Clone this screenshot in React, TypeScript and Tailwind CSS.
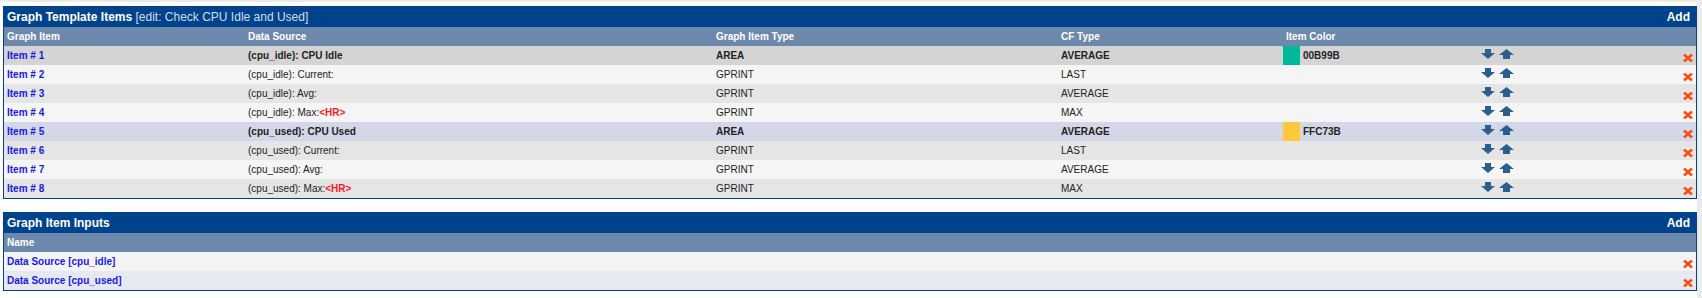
const GRID = "grid grid-cols-[241px_468px_345px_225px_195px_1fr_20px] items-center";

type Item = {
  n: number;
  ds: string;
  label: string;
  hr?: boolean;
  type: string;
  cf: string;
  color?: string;
  bg: string;
};

const items: Item[] = [
  { n: 1, ds: "cpu_idle", label: "CPU Idle", type: "AREA", cf: "AVERAGE", color: "00B99B", bg: "bg-[#d4d4d4]" },
  { n: 2, ds: "cpu_idle", label: "Current:", type: "GPRINT", cf: "LAST", bg: "bg-[#f5f5f5]" },
  { n: 3, ds: "cpu_idle", label: "Avg:", type: "GPRINT", cf: "AVERAGE", bg: "bg-[#e5e5e5]" },
  { n: 4, ds: "cpu_idle", label: "Max:", hr: true, type: "GPRINT", cf: "MAX", bg: "bg-[#f5f5f5]" },
  { n: 5, ds: "cpu_used", label: "CPU Used", type: "AREA", cf: "AVERAGE", color: "FFC73B", bg: "bg-[#d3d7e8]" },
  { n: 6, ds: "cpu_used", label: "Current:", type: "GPRINT", cf: "LAST", bg: "bg-[#e5e5e5]" },
  { n: 7, ds: "cpu_used", label: "Avg:", type: "GPRINT", cf: "AVERAGE", bg: "bg-[#f5f5f5]" },
  { n: 8, ds: "cpu_used", label: "Max:", hr: true, type: "GPRINT", cf: "MAX", bg: "bg-[#e5e5e5]" },
];

function DownArrow() {
  return (
    <svg width="14" height="10" viewBox="0 0 14 10" className="block">
      <path d="M4 0H10V4H14L7 10L0 4H4Z" fill="#2a5f8d" />
    </svg>
  );
}

function UpArrow() {
  return (
    <svg width="15" height="10" viewBox="0 0 15 10" className="block">
      <path d="M7.5 0L15 6H11V10H4V6H0Z" fill="#2a5f8d" />
    </svg>
  );
}

function DeleteIcon() {
  return (
    <svg width="10" height="8" viewBox="0 0 10 8" className="block">
      <path d="M1 0.5L9 7.5M9 0.5L1 7.5" stroke="#ff4a10" strokeWidth="2.6" />
    </svg>
  );
}

function TitleBar({ title, sub }: { title: string; sub?: string }) {
  return (
    <div className="flex h-[21px] items-center justify-between bg-[#00438c] px-[3px] text-[12px] font-bold text-white">
      <div>
        {title}
        {sub && <span className="font-normal text-[#d4deeb]"> {sub}</span>}
      </div>
      <span className="pr-[3px]">Add</span>
    </div>
  );
}

export default function App() {
  return (
    <div className="h-[298px] w-[1702px] border-t-2 border-r-[5px] border-[#ebebeb] bg-white pl-[3px] pt-[4px] font-['Liberation_Sans',Arial,sans-serif] text-[10px] text-[#222]">
      <div className="border-x border-b border-[#00438c]">
        <TitleBar title="Graph Template Items" sub="[edit: Check CPU Idle and Used]" />
        <div className={`${GRID} h-[19px] bg-[#6d88ad] font-bold text-white`}>
          <div className="px-[3px]">Graph Item</div>
          <div className="px-[3px]">Data Source</div>
          <div className="px-[3px]">Graph Item Type</div>
          <div className="px-[3px]">CF Type</div>
          <div className="px-[3px]">Item Color</div>
          <div />
          <div />
        </div>
        {items.map((it) => {
          const bold = it.type === "AREA";
          return (
            <div key={it.n} className={`${GRID} h-[19px] ${it.bg} ${bold ? "font-bold" : ""}`}>
              <div className="px-[3px] font-bold text-[#1717ee]">Item # {it.n}</div>
              <div className="px-[3px]">
                ({it.ds}): {it.label}
                {it.hr && <span className="font-bold text-[#ff1a1a]">&lt;HR&gt;</span>}
              </div>
              <div className="px-[3px]">{it.type}</div>
              <div className="px-[3px]">{it.cf}</div>
              <div className="flex h-full items-center">
                {it.color && (
                  <>
                    <div className="h-full w-[17px]" style={{ backgroundColor: `#${it.color}` }} />
                    <span className="pl-[3px]">{it.color}</span>
                  </>
                )}
              </div>
              <div className="flex items-center gap-[4px] px-[3px] pb-[3px]">
                <DownArrow />
                <UpArrow />
              </div>
              <div className="flex justify-end pr-[3px] pt-[4px]">
                <DeleteIcon />
              </div>
            </div>
          );
        })}
      </div>

      <div className="mt-[13px] border-x border-b border-[#00438c]">
        <TitleBar title="Graph Item Inputs" />
        <div className="flex h-[19px] items-center bg-[#6d88ad] px-[3px] font-bold text-white">Name</div>
        {[
          { name: "cpu_idle", bg: "bg-[#f4f4f4]" },
          { name: "cpu_used", bg: "bg-[#e6e9f2]" },
        ].map((r) => (
          <div key={r.name} className={`flex h-[19px] items-center justify-between px-[3px] ${r.bg}`}>
            <span className="font-bold text-[#1717ee]">Data Source [{r.name}]</span>
            <span className="pt-[4px]">
              <DeleteIcon />
            </span>
          </div>
        ))}
      </div>
    </div>
  );
}
